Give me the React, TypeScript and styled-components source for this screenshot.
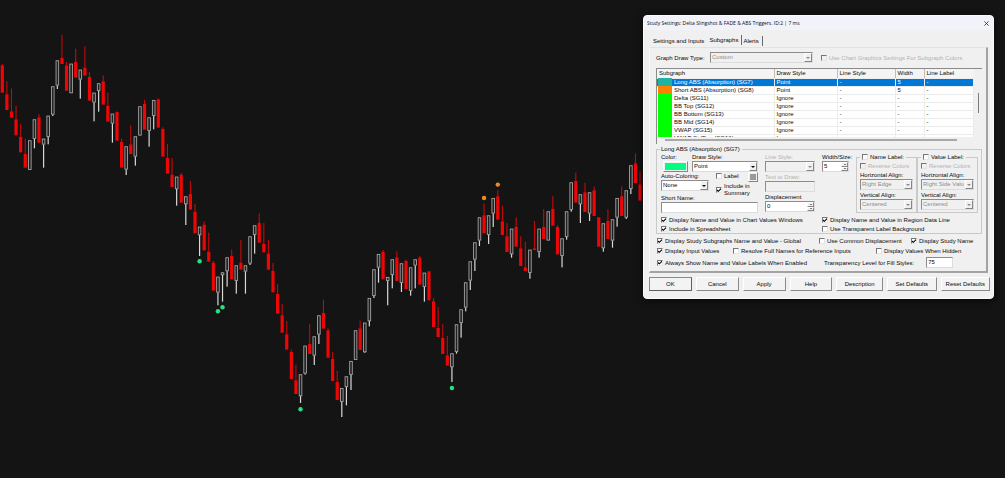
import React, { ReactNode, useId } from "react";
import styled, { createGlobalStyle, css } from "styled-components";

const GlobalStyle = createGlobalStyle`
  * { box-sizing: border-box; }
  body { margin: 0; background: #141414; }
  button, input, select { font: inherit; color: inherit; margin: 0; }
`;

/* ---------- Chart ---------- */

type Candle = [kind: "R" | "W", a: number, b: number, c: number];
type Dot = { index: number; y: number; color: string };

// Prices are stored in thirds of a chart unit, relative to the base of their run.
// R (down): high, open, close.  W (up): close, open, low.
const RUNS: { base: number; data: string }[] = [
  {
    base: 60,
    data: "R132,136,218 R184,223,270 R205,274,293 R257,298,346 R311,351,397 R356,402,443 W361,449,449 W298,356,385 R283,292,368 W356,373,443 W287,350,373 W199,283,288 W121,196,207 R44,114,132 R126,136,212 W131,219,219 R86,126,173 W149,178,236 R79,143,167 R156,171,242 W218,247,304 W190,212,275 R166,184,254 R218,258,305 W281,310,368 R274,276,362 R356,366,443 W379,448,465 R316,373,402 W349,409,437 W259,346,346 R240,252,329",
  },
  {
    base: 240,
    data: "W112,152,200 W60,107,148 R55,58,143 R142,147,230 R192,234,281 R234,284,321 W290,327,377 R279,284,368 W349,372,435 R303,342,389 R372,395,460 W440,465,528 R424,434,511 R458,515,545 R543,548,632 W590,637,676 W577,585,665 W532,573,620 R509,528,598",
  },
  {
    base: 600,
    data: "W196,242,281 R120,188,209 W196,214,281 W109,190,195 W76,104,161 R40,69,128 R69,132,157 R120,161,209 R189,213,277 R252,282,341 R311,346,398 R363,403,449 R449,456,537 R494,541,582 W523,588,609 W437,520,524 R373,432,462 W409,466,495 W346,403,432 R299,339,386 R385,391,473 R456,477,543 R512,546,600",
  },
  {
    base: 720,
    data: "W444,485,531 W409,440,496 W363,404,450 W271,359,359 R242,265,330 W248,336,338 W174,243,259 W88,167,174 W42,82,128 R30,35,118 W111,122,196 W58,104,145 R34,52,123 W70,128,156 R59,63,147 W82,152,167 W58,76,145 R48,53,134 W98,140,185 R93,94,181 R174,184,261 R201,264,291 R253,294,342 R288,346,377",
  },
  {
    base: 510,
    data: "W550,591,636 W463,545,551 W418,458,503 W337,412,424 W274,331,360 W217,268,303 W142,211,228 R101,136,190 W136,194,222 W84,130,171 R61,79,149 R107,154,195 R159,199,246 W176,252,263 R142,171,230 R199,235,288 R215,292,303 W239,308,326 R153,235,240",
  },
  {
    base: 420,
    data: "W266,335,353 R207,261,297 W214,301,301 R168,207,257 R256,261,343 W295,347,382 W214,290,299 W127,209,215 R98,123,188 W163,192,249 R128,157,216 W157,220,243 R140,151,228 R231,232,320 W250,324,335 R208,243,297 W238,301,323 W174,232,260 R139,169,228 W151,232,237 W76,146,162 R40,70,129 R94,133,182",
  },
];

const CANDLES: Candle[] = RUNS.flatMap(({ base, data }) =>
  data.split(" ").map((item): Candle => {
    const [a, b, c] = item.slice(1).split(",").map((n) => (Number(n) + base) / 3);
    return [item[0] as "R" | "W", a, b, c];
  })
);

const DOTS: Dot[] = [
  { index: 43, y: 261.3, color: "#1fe57f" },
  { index: 47, y: 311.3, color: "#1fe57f" },
  { index: 48, y: 307.3, color: "#1fe57f" },
  { index: 65, y: 409.2, color: "#1fe57f" },
  { index: 98, y: 388, color: "#1fe57f" },
  { index: 105, y: 198, color: "#f08a1c" },
  { index: 108, y: 184.6, color: "#f08a1c" },
];

const candleX = (i: number) => 2.3 + i * 4.588;

const ChartSvg = styled.svg`
  display: block;
  width: 100%;
  height: auto;
`;

const Chart = () => (
  <ChartSvg viewBox="0 0 1005 478" role="img" aria-label="Candlestick chart">
    {CANDLES.map(([kind, a, b, c], i) => {
      const x = candleX(i);
      return kind === "R" ? (
        <g key={i}>
          <rect x={x - 0.55} y={a} width={1.1} height={b - a} fill="#c80808" />
          <rect x={x - 1.6} y={b} width={3.2} height={c - b} fill="#ee0606" />
        </g>
      ) : (
        <g key={i}>
          <rect x={x - 0.6} y={b} width={1.2} height={c - b} fill="#d8d8d8" />
          <rect x={x - 1.3} y={a + 0.4} width={2.6} height={Math.max(b - a - 0.6, 1)} fill="#202020" stroke="#a4a4a4" strokeWidth={0.9} />
        </g>
      );
    })}
    {DOTS.map((d) => (
      <circle key={d.index} cx={candleX(d.index)} cy={d.y} r={2.2} fill={d.color} />
    ))}
  </ChartSvg>
);

/* ---------- Controls ---------- */

const sunken = css`
  border: 1px solid;
  border-color: #8c8c8c #dcdcdc #dcdcdc #8c8c8c;
`;

const raised = css`
  border: 1px solid;
  border-color: #fff #858585 #858585 #fff;
`;

const Box = styled.input`
  appearance: none;
  flex: none;
  display: grid;
  place-items: center;
  width: 6px;
  height: 6px;
  background: #fff;
  border: 1px solid;
  border-color: #767676 #e4e4e4 #e4e4e4 #767676;
  &:disabled { background: #f0f0f0; }
  &:checked::before {
    content: "";
    width: 4px;
    height: 4px;
    background: #000;
    clip-path: polygon(0 35%, 35% 65%, 100% 0, 100% 40%, 35% 100%, 0 75%);
  }
`;

const CheckLabel = styled.label<{ $dim?: boolean; $tall?: boolean }>`
  display: flex;
  align-items: center;
  gap: 2px;
  line-height: ${(p) => (p.$tall ? "7px" : "8px")};
  white-space: ${(p) => (p.$tall ? "normal" : "nowrap")};
  color: ${(p) => (p.$dim ? "#b2b2b2" : "inherit")};
`;

type CheckProps = { children: ReactNode; checked?: boolean; disabled?: boolean; tall?: boolean };
const Check = ({ children, checked, disabled, tall }: CheckProps) => (
  <CheckLabel $dim={disabled} $tall={tall}>
    <Box type="checkbox" defaultChecked={checked} disabled={disabled} />
    <span>{children}</span>
  </CheckLabel>
);

const ControlFrame = styled.span<{ $dim?: boolean }>`
  ${sunken}
  display: flex;
  align-items: stretch;
  height: 11px;
  background: ${(p) => (p.$dim ? "#f0f0f0" : "#fff")};
  color: ${(p) => (p.$dim ? "#8c8c8c" : "inherit")};
`;

const NativeSelect = styled.select`
  appearance: none;
  flex: 1;
  min-width: 0;
  padding: 0 1px;
  border: 0;
  background: transparent;
  line-height: 9px;
  opacity: 1;
`;

const ArrowButton = styled.span`
  ${raised}
  display: grid;
  place-items: center;
  width: 8px;
  background: #f0f0f0;
`;

const NativeInput = styled.input`
  flex: 1;
  width: 100%;
  min-width: 0;
  padding: 0 1px;
  border: 0;
  background: transparent;
  line-height: 9px;
`;

const Stepper = styled.span`
  display: grid;
  grid-template-rows: 1fr 1fr;
  width: 7px;
`;

const StepButton = styled.button`
  ${raised}
  display: grid;
  place-items: center;
  padding: 0;
  background: #f0f0f0;
`;

const Triangle = ({ up, size = 4 }: { up?: boolean; size?: number }) => (
  <svg width={size} height={size / 2} viewBox="0 0 4 2" aria-hidden="true">
    <path d={up ? "M0 2H4L2 0Z" : "M0 0H4L2 2Z"} fill="currentColor" />
  </svg>
);

type SelectProps = { id?: string; value: string; disabled?: boolean };
const Select = ({ id, value, disabled }: SelectProps) => (
  <ControlFrame $dim={disabled}>
    <NativeSelect id={id} disabled={disabled} defaultValue={value}>
      <option>{value}</option>
    </NativeSelect>
    <ArrowButton>
      <Triangle />
    </ArrowButton>
  </ControlFrame>
);

type TextProps = { id?: string; value?: string; disabled?: boolean; stepper?: boolean };
const TextBox = ({ id, value = "", disabled, stepper }: TextProps) => (
  <ControlFrame $dim={disabled}>
    <NativeInput id={id} type="text" defaultValue={value} disabled={disabled} />
    {stepper && (
      <Stepper>
        <StepButton type="button" aria-label="Increase">
          <Triangle up size={2} />
        </StepButton>
        <StepButton type="button" aria-label="Decrease">
          <Triangle size={2} />
        </StepButton>
      </Stepper>
    )}
  </ControlFrame>
);

const FieldWrap = styled.div<{ $dim?: boolean; $w?: number }>`
  display: flex;
  flex-direction: column;
  ${(p) => (p.$w ? `width: ${p.$w}px;` : "")}
  > label {
    white-space: nowrap;
    line-height: 8px;
    color: ${(p) => (p.$dim ? "#b2b2b2" : "inherit")};
  }
`;

type FieldProps = { label: string; dim?: boolean; width?: number; children: (id: string) => ReactNode };
const Field = ({ label, dim, width, children }: FieldProps) => {
  const id = useId();
  return (
    <FieldWrap $dim={dim} $w={width}>
      <label htmlFor={id}>{label}</label>
      {children(id)}
    </FieldWrap>
  );
};

const ColorButton = styled.button<{ $color: string; $small?: boolean }>`
  ${raised}
  width: ${(p) => (p.$small ? 10 : 25)}px;
  height: ${(p) => (p.$small ? 10 : 11)}px;
  padding: 1px;
  margin-left: ${(p) => (p.$small ? 0 : 2)}px;
  background: ${(p) => p.$color} content-box;
`;

/* ---------- Dialog ---------- */

const Desktop = styled.main`
  position: relative;
  min-height: 100vh;
  overflow: hidden;
  background: #141414;
`;

const Dialog = styled.section`
  position: absolute;
  top: 15px;
  right: 11px;
  width: 34%;
  min-width: 351px;
  border-radius: 4px;
  border: 1px solid #fafafa;
  overflow: hidden;
  background: #f0f0f0;
  color: #0a0a0a;
  font: 6px/8px "Liberation Sans", Arial, sans-serif;
  box-shadow: 0 2px 8px rgba(0, 0, 0, 0.6);
`;

const TitleBar = styled.header`
  display: flex;
  align-items: center;
  justify-content: space-between;
  height: 14px;
  padding: 0 4px 0 3px;
  background: #f2f3fa;
  font-family: "Open Sans", "Segoe UI", sans-serif;
`;

const Title = styled.h1`
  margin: 0;
  font-size: 5px;
  font-weight: 400;
`;

const CloseButton = styled.button`
  display: grid;
  place-items: center;
  padding: 0;
  border: 0;
  background: none;
`;

const Tabs = styled.nav`
  display: flex;
  align-items: flex-end;
  height: 17px;
  padding: 0 8px;
`;

const Tab = styled.button<{ $active?: boolean }>`
  height: 10px;
  padding: 0 3px 0 1px;
  margin-bottom: ${(p) => (p.$active ? 2 : 1)}px;
  border: 0;
  border-right: 1px solid transparent;
  background: none;
  white-space: nowrap;
  &:not(:first-child) { border-right-color: #6a6a6a; }
`;

const Panel = styled.div`
  margin: 0 5px;
  padding: 4px 4px 6px 6px;
  border: 1px solid;
  border-width: 1px 2px 2px 1px;
  border-color: #e2e2e2 #a2a2a2 #a2a2a2 #fafafa;
`;

const TypeRow = styled.div`
  display: flex;
  align-items: center;
  margin-bottom: 5px;
  > label:first-child { width: 54px; white-space: nowrap; }
  > ${ControlFrame} { width: 103px; margin-right: 8px; }
`;

const ListBox = styled.div`
  height: 76px;
  border-top: 1px solid #8a8a8a;
  border-left: 1px solid #8a8a8a;
`;

const ListView = styled.div`
  display: flex;
  height: 68px;
  overflow: hidden;
`;

const Table = styled.table`
  flex: 1;
  align-self: flex-start;
  table-layout: fixed;
  border-collapse: collapse;
  background: #fff;
  th, td {
    height: 8px;
    padding: 0 0 0 2px;
    border-right: 1px solid #ececec;
    border-bottom: 1px solid #ececec;
    line-height: 7px;
    text-align: left;
    font-weight: 400;
    white-space: nowrap;
  }
  th { height: 9px; line-height: 8px; background: #f4f4f4; border-right-color: #bdbdbd; }
  th:last-child { border-right-color: transparent; }
  td:first-child { padding-left: 1px; }
`;

const Row = styled.tr<{ $selected?: boolean }>`
  background: ${(p) => (p.$selected ? "#0078d7" : "#fff")};
  color: ${(p) => (p.$selected ? "#fff" : "inherit")};
`;

const NameCell = styled.div`
  display: flex;
  align-items: center;
  gap: 2px;
  height: 7px;
`;

const Swatch = styled.span<{ $color: string }>`
  width: 14px;
  height: 8px;
  background: ${(p) => p.$color};
`;

const VTrack = styled.div`
  display: flex;
  justify-content: center;
  width: 8px;
  padding-top: 24px;
  background: #f0f0f0;
`;

const VThumb = styled.div`
  width: 1px;
  height: 20px;
  background: #7c7c7c;
`;

const HTrack = styled.div`
  padding: 2px 25px 0 8px;
`;

const HThumb = styled.div`
  height: 2px;
  background: #a8a8a8;
`;

const Group = styled.fieldset`
  min-width: 0;
  margin: 1px 0 3px;
  padding: 0 3px 0 4px;
  border: 1px solid #c9c9c9;
  > legend { padding: 0 2px 0 1px; margin-left: -1px; line-height: 8px; }
`;

const GroupBody = styled.div`
  display: flex;
  justify-content: space-between;
  margin-bottom: 3px;
`;

const StyleColumn = styled.div`
  width: 97px;
`;

const Column = styled.div<{ $w: number }>`
  width: ${(p) => p.$w}px;
  display: flex;
  flex-direction: column;
  gap: 1px;
`;

const Inline = styled.div<{ $h?: number }>`
  display: flex;
  justify-content: space-between;
  ${(p) => (p.$h ? `height: ${p.$h}px;` : "")}
`;

const Options = styled.div`
  display: flex;
  flex-direction: column;
  gap: 1px;
  width: 42px;
`;

const OptionTop = styled.div`
  display: flex;
  align-items: flex-start;
  justify-content: space-between;
`;

const AlignGroup = styled.fieldset`
  width: 61px;
  min-width: 0;
  margin: 0;
  padding: 1px 3px 0;
  border: 1px solid #c9c9c9;
  > legend { padding: 0 2px; }
`;

const AlignFields = styled.div`
  display: flex;
  flex-direction: column;
  gap: 1px;
`;

const CheckGrid = styled.div`
  display: grid;
  grid-template-columns: 161px 1fr;
  row-gap: 1px;
`;

const Globals = styled.div`
  display: flex;
  flex-direction: column;
  gap: 2px;
  padding-left: 1px;
`;

const GlobalRow = styled.div<{ $cols: string }>`
  display: grid;
  grid-template-columns: ${(p) => p.$cols};
  align-items: center;
  height: 8px;
`;

const Transparency = styled.div`
  display: flex;
  align-items: center;
  gap: 12px;
  white-space: nowrap;
  > ${ControlFrame} { width: 27px; }
`;

const Footer = styled.footer`
  display: flex;
  gap: 4px;
  padding: 4px 3px 7px 5px;
`;

const PushButton = styled.button<{ $w: number; $primary?: boolean }>`
  flex: ${(p) => p.$w} 1 0;
  height: 14px;
  padding: 0;
  background: #f3f3f3;
  border: 1px solid;
  border-color: ${(p) => (p.$primary ? "#8a8a8a #5f5f5f #5f5f5f #8a8a8a" : "#fff #8a8a8a #8a8a8a #fff")};
  white-space: nowrap;
`;

const SUBGRAPHS = [
  { name: "Long ABS (Absorption) (SG7)", color: "#1fb3a3", style: "Point", width: "5", selected: true },
  { name: "Short ABS (Absorption) (SG8)", color: "#ff8000", style: "Point", width: "5" },
  { name: "Delta (SG11)", color: "#00ff00", style: "Ignore", width: "-" },
  { name: "BB Top (SG12)", color: "#00ff00", style: "Ignore", width: "-" },
  { name: "BB Bottom (SG13)", color: "#00ff00", style: "Ignore", width: "-" },
  { name: "BB Mid (SG14)", color: "#00ff00", style: "Ignore", width: "-" },
  { name: "VWAP (SG15)", color: "#00ff00", style: "Ignore", width: "-" },
  { name: "VWAP StdDev (SG16)", color: "#00ff00", style: "Ignore", width: "-" },
];

const ACTIONS = [
  { label: "OK", width: 43 },
  { label: "Cancel", width: 43 },
  { label: "Apply", width: 43 },
  { label: "Help", width: 43 },
  { label: "Description", width: 47 },
  { label: "Set Defaults", width: 50 },
  { label: "Reset Defaults", width: 50 },
];

const AlignBox = ({ title, horizontal }: { title: string; horizontal: string }) => (
  <AlignGroup>
    <legend>
      <Check>{title}</Check>
    </legend>
    <AlignFields>
      <Check disabled>Reverse Colors</Check>
      <Field label="Horizontal Align:">{(id) => <Select id={id} value={horizontal} disabled />}</Field>
      <Field label="Vertical Align:">{(id) => <Select id={id} value="Centered" disabled />}</Field>
    </AlignFields>
  </AlignGroup>
);

const SubgraphTable = () => (
  <ListBox>
    <ListView>
      <Table>
        <colgroup>
          <col width="117" />
          <col width="63" />
          <col width="58" />
          <col width="29" />
          <col />
        </colgroup>
        <thead>
          <tr>
            {["Subgraph", "Draw Style", "Line Style", "Width", "Line Label"].map((h) => (
              <th key={h} scope="col">{h}</th>
            ))}
          </tr>
        </thead>
        <tbody>
          {SUBGRAPHS.map((s) => (
            <Row key={s.name} $selected={s.selected}>
              <td>
                <NameCell>
                  <Swatch $color={s.color} />
                  {s.name}
                </NameCell>
              </td>
              <td>{s.style}</td>
              <td>-</td>
              <td>{s.width}</td>
              <td>-</td>
            </Row>
          ))}
        </tbody>
      </Table>
      <VTrack>
        <VThumb />
      </VTrack>
    </ListView>
    <HTrack>
      <HThumb />
    </HTrack>
  </ListBox>
);

const SubgraphSettings = () => (
  <Group>
    <legend>Long ABS (Absorption) (SG7)</legend>
    <GroupBody>
      <StyleColumn>
        <Inline>
          <Field label="Color:">{(id) => <ColorButton id={id} type="button" $color="#00ff80" />}</Field>
          <Field label="Draw Style:" width={66}>{(id) => <Select id={id} value="Point" />}</Field>
        </Inline>
        <Inline $h={22}>
          <Field label="Auto-Coloring:" width={48}>{(id) => <Select id={id} value="None" />}</Field>
          <Options>
            <OptionTop>
              <Check>Label</Check>
              <ColorButton type="button" aria-label="Label color" $color="#9a9a9a" $small />
            </OptionTop>
            <Check checked tall>Include in Summary</Check>
          </Options>
        </Inline>
        <Field label="Short Name:">{(id) => <TextBox id={id} />}</Field>
      </StyleColumn>
      <Column $w={50}>
        <Field label="Line Style:" dim>{(id) => <Select id={id} value="" disabled />}</Field>
        <Field label="Text to Draw:" dim>{(id) => <TextBox id={id} disabled />}</Field>
        <Field label="Displacement">{(id) => <TextBox id={id} value="0" stepper />}</Field>
      </Column>
      <Column $w={27}>
        <Field label="Width/Size:">{(id) => <TextBox id={id} value="5" stepper />}</Field>
      </Column>
      <Inline>
        <AlignBox title="Name Label:" horizontal="Right Edge" />
        <AlignBox title="Value Label:" horizontal="Right Side Values" />
      </Inline>
    </GroupBody>
    <CheckGrid>
      <Check checked>Display Name and Value in Chart Values Windows</Check>
      <Check checked>Display Name and Value in Region Data Line</Check>
      <Check checked>Include in Spreadsheet</Check>
      <Check>Use Transparent Label Background</Check>
    </CheckGrid>
  </Group>
);

export default function App() {
  return (
    <Desktop>
      <GlobalStyle />
      <Chart />
      <Dialog role="dialog" aria-labelledby="dialog-title">
        <TitleBar>
          <Title id="dialog-title">Study Settings: Delta Slingshot &amp; FADE &amp; ABS Triggers. ID:2 | 7 ms</Title>
          <CloseButton type="button" aria-label="Close">
            <svg width="5" height="5" viewBox="0 0 5 5">
              <path d="M0.4 0.4L4.6 4.6M4.6 0.4L0.4 4.6" stroke="#222" strokeWidth="0.8" />
            </svg>
          </CloseButton>
        </TitleBar>
        <Tabs>
          <Tab type="button">Settings and Inputs</Tab>
          <Tab type="button" $active>Subgraphs</Tab>
          <Tab type="button">Alerts</Tab>
        </Tabs>
        <Panel>
          <TypeRow>
            <label htmlFor="draw-type">Graph Draw Type:</label>
            <Select id="draw-type" value="Custom" disabled />
            <Check disabled>Use Chart Graphics Settings For Subgraph Colors</Check>
          </TypeRow>
          <SubgraphTable />
          <SubgraphSettings />
          <Globals>
            <GlobalRow $cols="162px 92px 1fr">
              <Check checked>Display Study Subgraphs Name and Value - Global</Check>
              <Check>Use Common Displacement</Check>
              <Check checked>Display Study Name</Check>
            </GlobalRow>
            <GlobalRow $cols="76px 143px 1fr">
              <Check checked>Display Input Values</Check>
              <Check>Resolve Full Names for Reference Inputs</Check>
              <Check>Display Values When Hidden</Check>
            </GlobalRow>
            <GlobalRow $cols="167px 1fr">
              <Check checked>Always Show Name and Value Labels When Enabled</Check>
              <Transparency>
                <label htmlFor="transparency">Transparency Level for Fill Styles:</label>
                <TextBox id="transparency" value="75" />
              </Transparency>
            </GlobalRow>
          </Globals>
        </Panel>
        <Footer>
          {ACTIONS.map((a) => (
            <PushButton key={a.label} type="button" $w={a.width} $primary={a.label === "OK"}>
              {a.label}
            </PushButton>
          ))}
        </Footer>
      </Dialog>
    </Desktop>
  );
}
